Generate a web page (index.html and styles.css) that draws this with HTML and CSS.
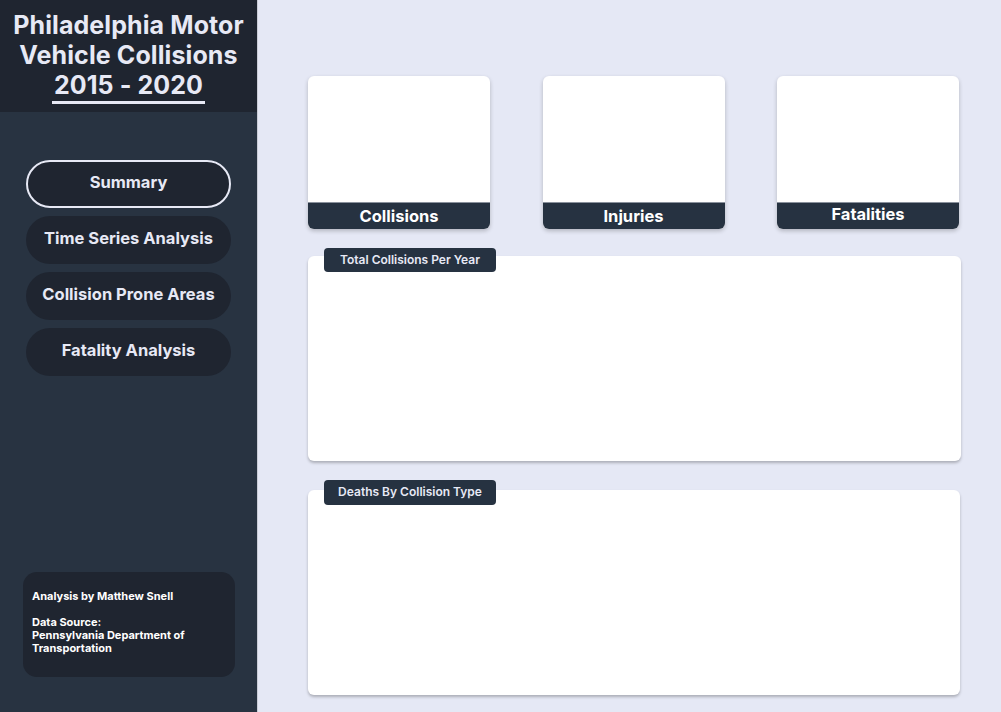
FILE: index.html
```html
<!DOCTYPE html>
<html>
<head>
<meta charset="utf-8">
<link rel="stylesheet" href="styles.css">
</head>
<body>
<div class="app">
  <aside class="sidebar">
    <header class="brand">
      <h1 class="brand-title">Philadelphia Motor<br>Vehicle Collisions<br><span class="years">2015 - 2020</span></h1>
    </header>
    <nav class="nav">
      <a class="nav-btn active">Summary</a>
      <a class="nav-btn">Time Series Analysis</a>
      <a class="nav-btn">Collision Prone Areas</a>
      <a class="nav-btn">Fatality Analysis</a>
    </nav>
    <div class="credits">
      <p>Analysis by Matthew Snell</p>
      <p>Data Source:<br>Pennsylvania Department of<br>Transportation</p>
    </div>
  </aside>
  <main class="main">
    <section class="cards">
      <div class="card"><div class="card-body"></div><div class="card-label">Collisions</div></div>
      <div class="card"><div class="card-body"></div><div class="card-label">Injuries</div></div>
      <div class="card"><div class="card-body"></div><div class="card-label up">Fatalities</div></div>
    </section>
    <section class="panel panel-first">
      <div class="panel-tab">Total Collisions Per Year</div>
    </section>
    <section class="panel panel-second">
      <div class="panel-tab">Deaths By Collision Type</div>
    </section>
  </main>
</div>
</body>
</html>
```
FILE: styles.css
```css
* { box-sizing: border-box; }
html, body { margin: 0; padding: 0; }
body {
  font-family: Inter, "Noto Sans", sans-serif;
  background: #e5e8f5;
  width: 1001px;
  height: 712px;
  overflow: hidden;
}
.app {
  display: flex;
  height: 712px;
}
.sidebar {
  width: 258px;
  flex: 0 0 258px;
  background: #283341;
  display: flex;
  flex-direction: column;
  border-right: 1px solid #c9ccd6;
}
.brand {
  height: 112px;
  background: #1f2530;
  display: flex;
  justify-content: center;
  padding-top: 10px;
}
.brand-title {
  margin: 0;
  color: #e7e9f5;
  font-size: 25px;
  font-weight: 700;
  line-height: 30px;
  text-align: center;
  letter-spacing: 0.1px;
}
.years {
  display: inline-block;
  border-bottom: 3px solid #e7e9f5;
  padding: 0 2px 3px;
  line-height: 26px;
}
.nav {
  display: flex;
  flex-direction: column;
  gap: 8px;
  padding: 48px 26px 0 26px;
}
.nav-btn {
  display: flex;
  align-items: center;
  justify-content: center;
  width: 205px;
  height: 48px;
  border-radius: 24px;
  background: #1f2530;
  color: #e7e9f5;
  font-size: 16.5px;
  font-weight: 700;
  padding-bottom: 5px;
}
.nav-btn.active {
  border: 2px solid #e7e9f5;
}
.credits {
  margin: auto 22px 35px 23px;
  height: 105px;
  background: #1f2530;
  border-radius: 14px;
  padding: 18px 9px;
  color: #ffffff;
  font-size: 11px;
  font-weight: 700;
  line-height: 13px;
}
.credits p { margin: 0 0 13px; }
.main {
  flex: 1;
  padding: 76px 40px 0 50px;
}
.cards {
  display: grid;
  grid-template-columns: 182px 182px 182px;
  column-gap: 52.5px;
}
.card {
  height: 153px;
  border-radius: 6px;
  background: #ffffff;
  box-shadow: 0 2px 4px rgba(0,0,0,0.22);
  display: flex;
  flex-direction: column;
  overflow: hidden;
}
.card-body { flex: 1; }
.card-label {
  height: 27px;
  background: #263241;
  border-top: 1px solid #8a919c;
  color: #ffffff;
  font-size: 16.5px;
  font-weight: 700;
  text-align: center;
  line-height: 26px;
}
.card-label.up { line-height: 22px; }
.panel {
  position: relative;
  background: #ffffff;
  border-radius: 6px;
  height: 205px;
  box-shadow: 0 2px 3px rgba(0,0,0,0.25);
}
.panel-first { margin-top: 27px; }
.panel-second { margin-top: 29px; width: 652px; }
.panel-tab {
  position: absolute;
  left: 16px;
  top: -8px;
  width: 172px;
  height: 24px;
  background: #263241;
  border-radius: 4px;
  color: #e7e9f5;
  font-size: 12px;
  font-weight: 600;
  text-align: center;
  line-height: 24px;
}
.panel-second .panel-tab { top: -10px; height: 25px; }
```
